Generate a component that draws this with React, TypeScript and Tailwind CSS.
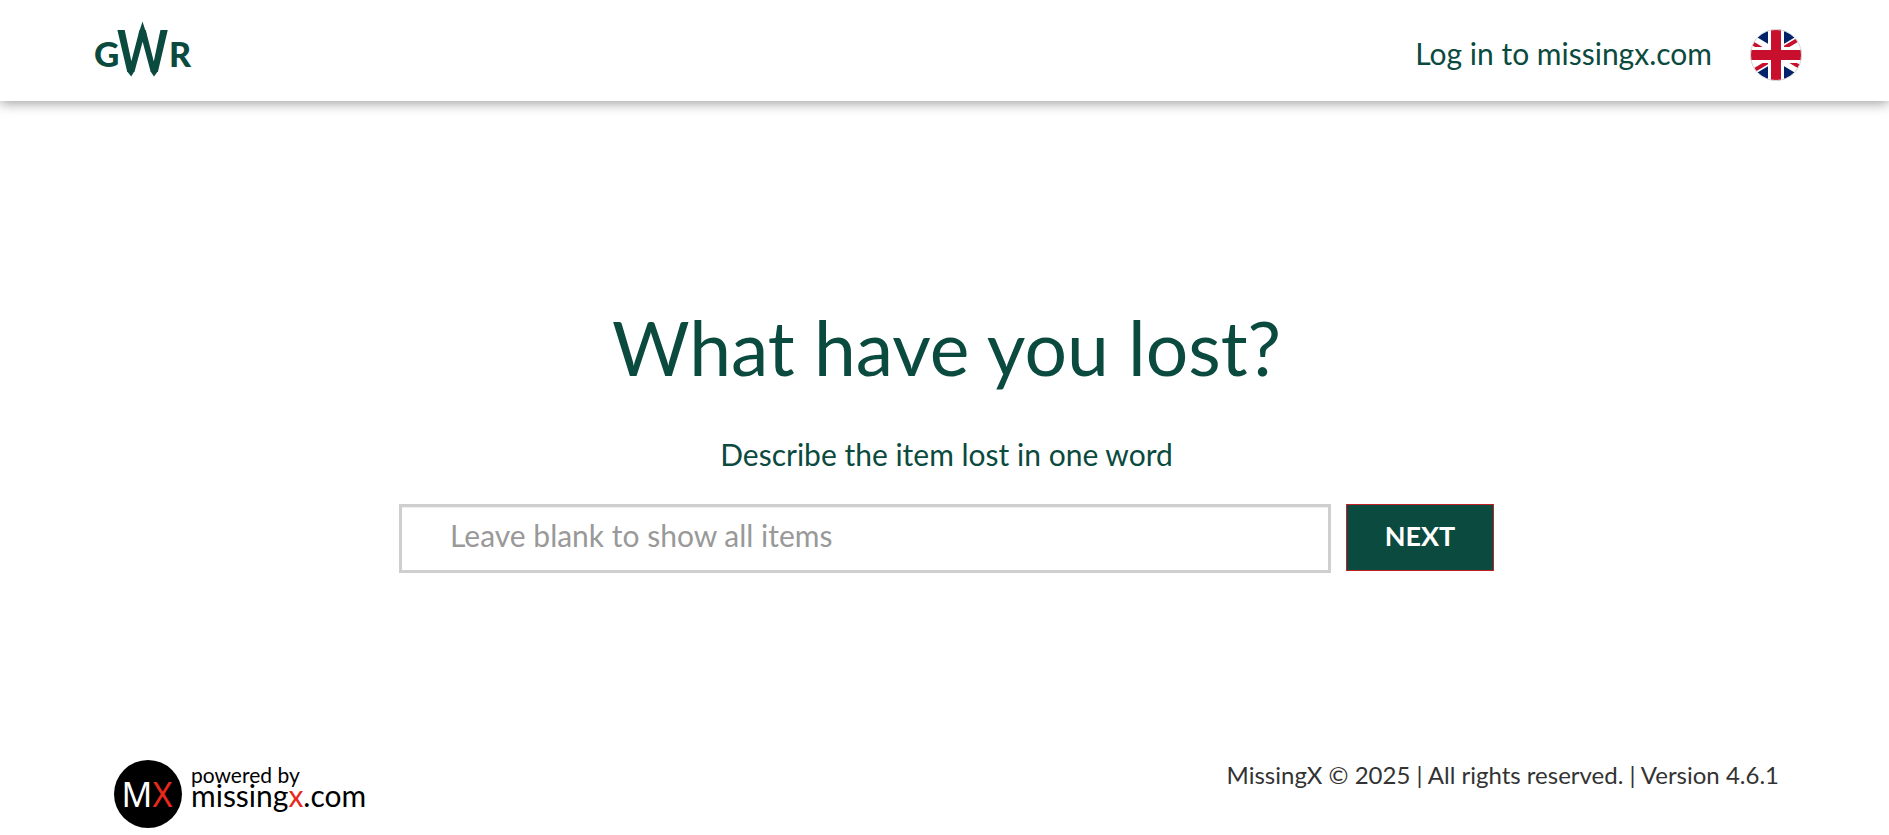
function GwrLogo() {
  return (
    <svg viewBox="0 0 98 54" className="h-[54px] w-[98px] overflow-visible" role="img" aria-label="GWR" fill="#0b4a3e">
      <text x="0" y="45" fontFamily="Lato, sans-serif" fontWeight="900" fontSize="35">G</text>
      <text x="22" y="50" fontFamily="Roboto, sans-serif" fontWeight="500" fontSize="60">W</text>
      <path d="M48.500 -0.500L52.500 12H44.500ZM33.200 49.500H40.300L37.200 54.500ZM56.600 49.500H63.700L60 54.500Z" />
      <text x="75" y="45" fontFamily="Lato, sans-serif" fontWeight="900" fontSize="34">R</text>
    </svg>
  );
}

function UkFlag() {
  return (
    <svg viewBox="0 0 52 52" className="size-[52px]" aria-hidden="true">
      <defs>
        <clipPath id="disc"><circle cx="26" cy="26" r="25.500" /></clipPath>
      </defs>
      <g clipPath="url(#disc)">
        <rect width="52" height="52" fill="#012169" />
        <path d="M-24 -4L76 56M76 -4L-24 56" stroke="#fff" strokeWidth="11" />
        <path
          d="M0 10.400L26 26V30.500L0 14.900ZM52 10.400L26 26V21.500L52 5.900ZM52 41.600L26 26V21.500L52 37.100ZM0 41.600L26 26V30.500L0 46.100Z"
          fill="#c8102e"
        />
        <path d="M26 0V52M0 26H52" stroke="#fff" strokeWidth="16" />
        <path d="M26 0V52M0 26H52" stroke="#c8102e" strokeWidth="10" />
      </g>
      <circle cx="26" cy="26" r="25.500" fill="none" stroke="#ddd" />
    </svg>
  );
}

export default function App() {
  return (
    <div className="flex min-h-screen flex-col bg-white font-[Lato,sans-serif] text-[#0b4a3e]">
      <header className="flex h-[101px] items-center justify-between pr-[87px] pl-[94px] shadow-[0_2px_12px_rgba(0,0,0,0.4)]">
        <a href="#home" className="pb-1"><GwrLogo /></a>
        <div className="flex items-center gap-[38px] pt-1">
          <a href="#login" className="text-[30px] leading-9">Log in to missingx.com</a>
          <button type="button" aria-label="Language: English" className="pt-1"><UkFlag /></button>
        </div>
      </header>

      <main className="flex grow flex-col items-center pt-[198px] pl-1">
        <h1 className="text-[75px] leading-[96px]">What have you lost?</h1>
        <form className="mt-10 flex w-full max-w-[1095px] flex-col" onSubmit={(e) => e.preventDefault()}>
          <label htmlFor="item" className="text-center text-[30px] leading-[38px]">Describe the item lost in one word</label>
          <div className="mt-[31px] flex items-start gap-[15px]">
            <input
              id="item"
              type="text"
              placeholder="Leave blank to show all items"
              className="h-[69px] min-w-0 grow border-3 border-[#cfcfcf] px-12 pb-2 text-[30px] text-[#555] shadow-[inset_0_1px_1px_rgba(0,0,0,0.075)] outline-none placeholder:text-[#999]"
            />
            <button type="submit" className="h-[67px] w-[148px] border border-[#c12126] bg-[#0b4a3e] pb-[2px] text-[27px] font-bold text-white">
              NEXT
            </button>
          </div>
        </form>
      </main>

      <footer className="flex items-start justify-between pr-[110px] pb-[7px] pl-[114px]">
        <a href="#missingx" className="flex items-center gap-[9px] text-black">
          <span className="flex size-[68px] items-center justify-center rounded-full bg-black pr-[2px] font-['Noto_Sans',sans-serif] text-[34px] text-white">
            M<span className="text-[#e8291c]">X</span>
          </span>
          <span className="flex flex-col pb-[18px]">
            <span className="text-[21px] leading-5">powered by</span>
            <span className="text-[30px] leading-5">missing<span className="text-[#e8291c]">x</span>.com</span>
          </span>
        </a>
        <p className="text-[24px] leading-[30px] text-[#333]">MissingX © 2025 | All rights reserved. | Version 4.6.1</p>
      </footer>
    </div>
  );
}
